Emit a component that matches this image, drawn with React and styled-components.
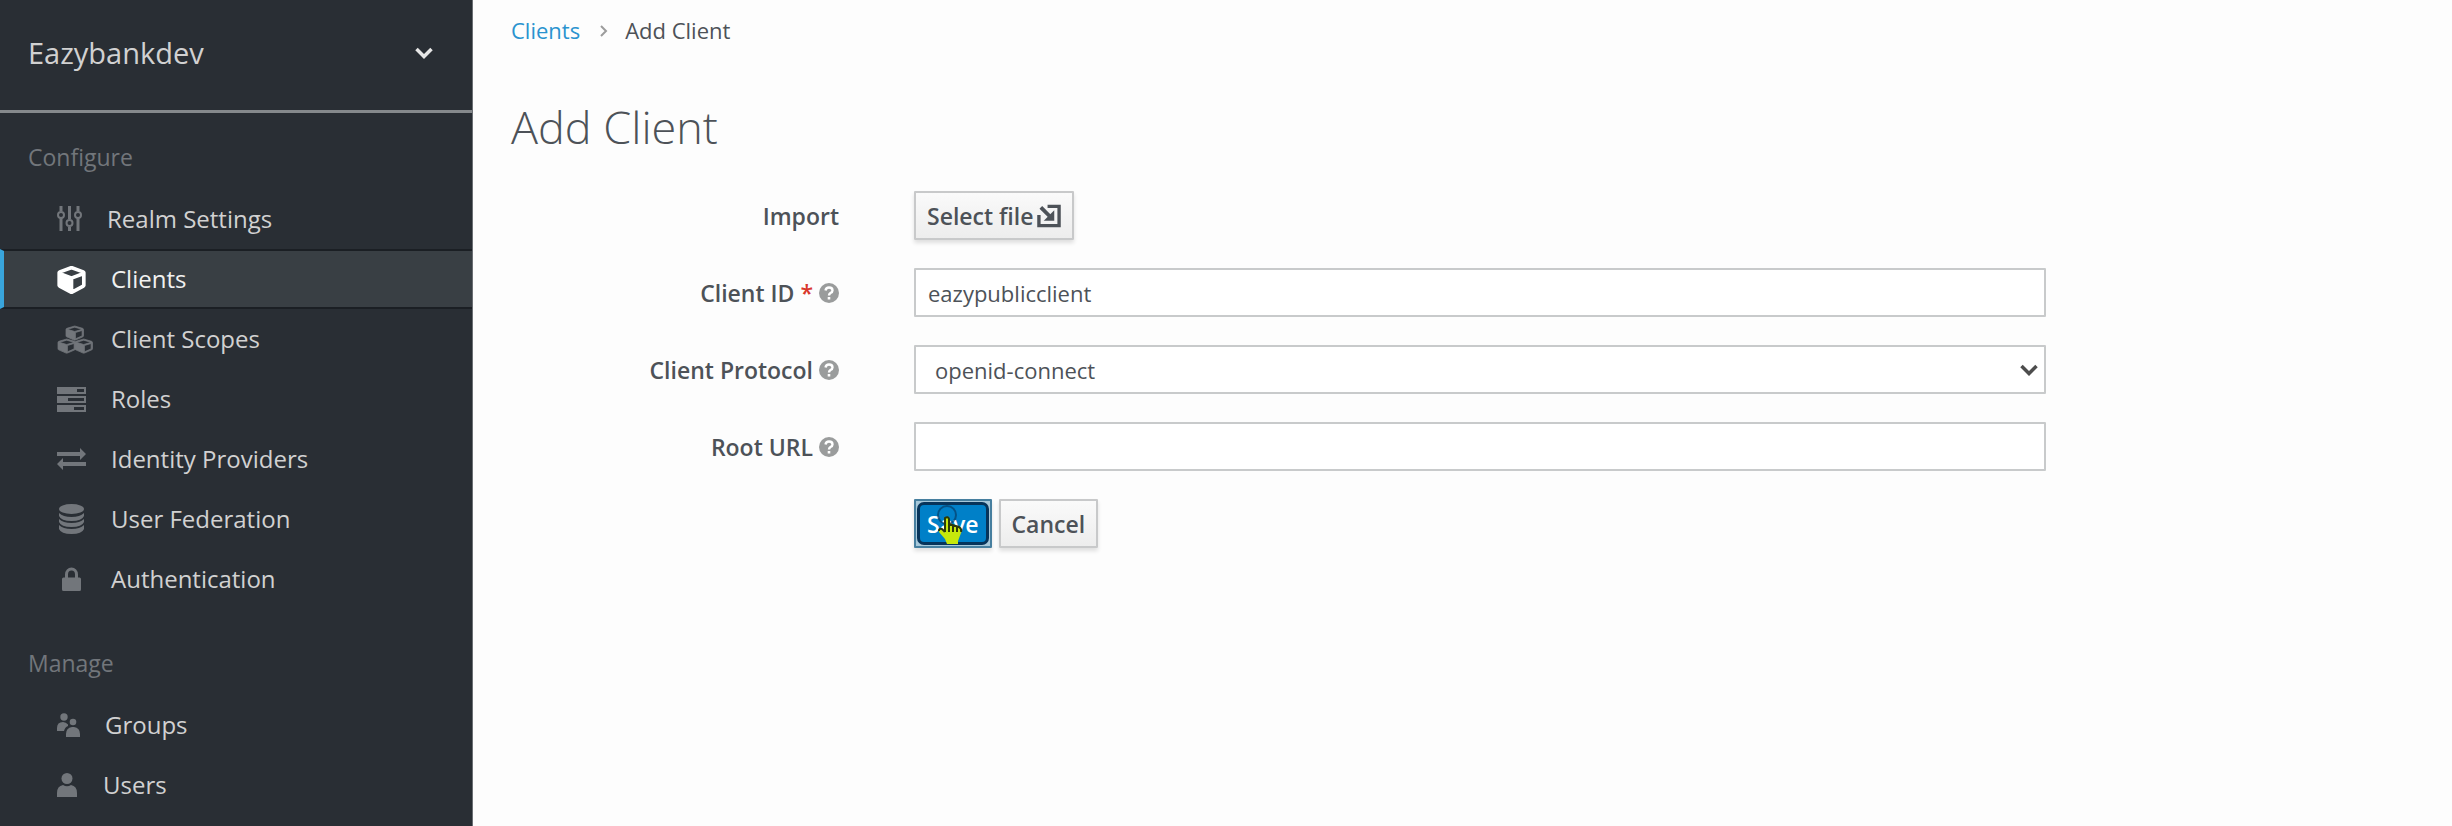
import React from "react";
import styled, { createGlobalStyle, css } from "styled-components";

const Global = createGlobalStyle`
  *, *::before, *::after { box-sizing: border-box; }
  body { margin: 0; background: #fdfdfd; color: #4d5258; font: 400 22px/36px "Open Sans", "Noto Sans", sans-serif; }
  ul, ol { list-style: none; margin: 0; padding: 0; }
  a { text-decoration: none; color: inherit; }
  button, input, select { font: inherit; color: inherit; }
`;

const Page = styled.div`
  display: grid;
  grid-template-columns: 473px minmax(0, 1fr);
  min-height: 100vh;
`;

const Sidebar = styled.nav`
  background: #292e34;
  border-right: 1px solid #6b6f74;
  color: #d1d1d1;
  height: 100vh;
  overflow: hidden;
`;

const RealmButton = styled.button`
  display: flex;
  align-items: center;
  justify-content: space-between;
  width: 100%;
  height: 113px;
  padding: 0 39px 4px 28px;
  border: 0;
  border-bottom: 3px solid #85898c;
  background: none;
  font-size: 29px;
`;

const SectionTitle = styled.h2`
  margin: 0;
  padding: ${(p) => (p.$first ? "26px" : "36px")} 28px 0;
  height: ${(p) => (p.$first ? "76px" : "86px")};
  font-size: 23px;
  line-height: 36px;
  font-weight: 400;
  color: #72767b;
`;

const NavLink = styled.a`
  display: flex;
  align-items: center;
  gap: 26px;
  height: 60px;
  padding-left: 53px;
  border-left: 4px solid transparent;
  border-top: 2px solid transparent;
  border-bottom: 2px solid transparent;
  font-size: 24px;
  font-weight: 500;
  color: #d1d1d1;
  svg { color: #72767b; }
  ${(p) => p.$active && css`
    background: #393f44;
    border-top-color: #1b1f24;
    border-bottom-color: #1b1f24;
    border-left-color: #39a5dc;
    color: #f1f1f1;
    svg { color: #fff; }
  `}
`;

const IconSlot = styled.span`
  display: flex;
  width: ${(p) => p.$width}px;
  svg { flex: none; fill: currentColor; }
`;

const Main = styled.main`
  padding: 12px 38px 0;
`;

const Breadcrumb = styled.ol`
  display: flex;
  align-items: center;
  a { color: #2a93cf; }
  svg { margin: 2px 17px 0 20px; }
`;

const Title = styled.h1`
  margin: 47px 0 32px;
  font-size: 45px;
  line-height: 64px;
  font-weight: 300;
`;

const Form = styled.form`
  display: grid;
  gap: 28px;
`;

const Row = styled.div`
  display: grid;
  grid-template-columns: 328fr 1132fr 293fr;
  column-gap: 75px;
  align-items: center;
  min-height: 49px;
`;

const Label = styled.label`
  display: flex;
  justify-content: flex-end;
  align-items: center;
  gap: 6px;
  font-size: 23px;
  font-weight: 600;
  white-space: nowrap;
`;

const Required = styled.span`
  color: #d9372c;
`;

const field = css`
  width: 100%;
  height: 49px;
  border: 2px solid #c8cacb;
  border-radius: 1px;
  background: #fff;
  outline: 0;
`;

const TextInput = styled.input`
  ${field}
  padding: 0 12px;
`;

const SelectWrap = styled.div`
  position: relative;
  svg { position: absolute; right: 8px; top: 19px; pointer-events: none; }
`;

const Select = styled.select`
  ${field}
  appearance: none;
  padding: 0 40px 0 19px;
`;

const Actions = styled.div`
  display: flex;
  gap: 7px;
  grid-column: 2;
`;

const Button = styled.button`
  position: relative;
  display: inline-flex;
  align-items: center;
  gap: 4px;
  height: 49px;
  padding: 0 11px;
  border: 2px solid #c8c9ca;
  border-radius: 1px;
  background: linear-gradient(#fafafa, #ededed);
  box-shadow: 0 3px 4px rgba(3, 3, 3, 0.12);
  font-size: 23px;
  font-weight: 600;
`;

const PrimaryButton = styled(Button)`
  border-color: #477f9f;
  background: #a7c8da;
  color: #fff;
  z-index: 0;
  &::before {
    content: "";
    position: absolute;
    inset: 1px;
    z-index: -1;
    border: 3px solid #07345a;
    border-radius: 7px;
    background: #0080c8;
  }
`;

const Pointer = styled.svg`
  position: absolute;
  left: 19px;
  top: 3px;
  pointer-events: none;
`;

const CUBE = "M896 1629l640-349v-636l-640 233v752zM832 765l698-254-698-254-698 254zM1664 512v768q0 35-18 65t-49 47l-704 384q-28 16-61 16t-61-16l-704-384q-31-17-49-47t-18-65v-768q0-40 23-73t61-47l704-256q22-8 44-8t44 8l704 256q38 14 61 47t23 73z";

const icons = {
  sliders: (
    <svg width="25" height="26" viewBox="0 0 25 26">
      <g fill="none" stroke="currentColor" strokeWidth="2">
        <path d="M4 0v5M4 12v13M12.500 0v13M12.500 21v4M21 0v5M21 12v13" strokeWidth="3" />
        <circle cx="4" cy="9" r="3" /><circle cx="12.500" cy="17" r="3" /><circle cx="21" cy="9" r="3" />
      </g>
    </svg>
  ),
  cube: (
    <svg width="29" height="30" viewBox="-40 -40 1744 1872">
      <path fillRule="evenodd" stroke="currentColor" strokeWidth="100" d={CUBE} />
    </svg>
  ),
  cubes: (
    <svg width="36" height="30" viewBox="0 0 36 30">
      {["translate(9 1)", "translate(1 14)", "translate(18 14)"].map((t) => (
        <g key={t} transform={t}>
          <path fillRule="evenodd" stroke="currentColor" strokeWidth="80" transform="scale(.0105 .0085)" d={CUBE} />
        </g>
      ))}
    </svg>
  ),
  tasks: (
    <svg width="29" height="25" viewBox="0 0 29 25">
      <path fillRule="evenodd" d="M0 0h29v7H0zM20 2v3h7V2zM0 9h29v7H0zM11 11v3h16v-3zM0 18h29v7H0zM17 20v3h10v-3z" />
    </svg>
  ),
  exchange: (
    <svg width="29" height="22" viewBox="0 0 29 22">
      <path d="M0 4h23V0l6 6-6 6V8H0zM29 14H6v-4l-6 6 6 6v-4h23z" />
    </svg>
  ),
  database: (
    <svg width="28" height="30" viewBox="0 0 28 30">
      <ellipse cx="14.500" cy="5" rx="12.500" ry="5" />
      <path d="M2 9q4 4 12.500 4T27 9v3q-2 5-12.500 5T2 12zM2 15q4 4 12.500 4T27 15v3q-2 5-12.500 5T2 18zM2 21q4 4 12.500 4T27 21v4q-2 5-12.500 5T2 25z" />
    </svg>
  ),
  lock: (
    <svg width="28" height="24" viewBox="0 0 28 24">
      <path fillRule="evenodd" d="M5 12q0-1.500 1.500-1.500H8V7.500a6.500 7 0 0 1 13 0v3h1.500q1.500 0 1.500 1.500v10.500q0 1.500-1.500 1.500h-16Q5 24 5 22.500zM11 10.500h7v-3a3.500 4 0 0 0-7 0z" />
    </svg>
  ),
  groups: (
    <svg width="23" height="24" viewBox="0 0 23 24">
      <circle cx="7" cy="4" r="3.700" /><circle cx="16" cy="9" r="3.300" />
      <path d="M0 18v-3q0-6 6-6 3 0 5 2.500L11 13q-3 1-4 5zM9 24v-3q0-6 6-7h2q6 1 6 7v3z" />
    </svg>
  ),
  user: (
    <svg width="20" height="24" viewBox="0 0 20 24">
      <circle cx="10" cy="5.500" r="5.500" /><path d="M0 24v-4q0-7 6-8 4 2.500 8 0 6 1 6 8v4z" />
    </svg>
  ),
};

const Chevron = ({ color }) => (
  <svg width="18" height="12" viewBox="0 0 18 12" fill="none" stroke={color} strokeWidth="3.500" aria-hidden="true">
    <path d="M1.500 2l7.500 7.500L16.500 2" />
  </svg>
);

const Help = () => (
  <svg width="20" height="20" viewBox="0 0 20 20" role="img" aria-label="Help">
    <circle cx="10" cy="10" r="10" fill="#9a9c9c" />
    <path d="M6.500 7.500Q7 4.500 10 4.500q3.500 0 3.500 3 0 1.500-2 2.500-1.500 1-1.500 2.500" fill="none" stroke="#fff" strokeWidth="2.400" />
    <path d="M8.700 14h2.600v2.500H8.700z" fill="#fff" />
  </svg>
);

const ImportIcon = () => (
  <svg width="24" height="24" viewBox="0 0 25 24" aria-hidden="true">
    <path d="M11 2h12v20H2V11" fill="none" stroke="#4d5258" strokeWidth="3.500" />
    <path d="M4 3l9 9" stroke="#4d5258" strokeWidth="4" />
    <path d="M18 6v11H7z" fill="#4d5258" />
  </svg>
);

const configure = [
  ["Realm Settings", "sliders", 24],
  ["Clients", "cube", 28],
  ["Client Scopes", "cubes", 28],
  ["Roles", "tasks", 28],
  ["Identity Providers", "exchange", 28],
  ["User Federation", "database", 28],
  ["Authentication", "lock", 28],
];
const manage = [["Groups", "groups", 22], ["Users", "user", 20]];

const Menu = ({ items }) => (
  <ul>
    {items.map(([name, icon, width]) => (
      <li key={name}>
        <NavLink href="#" $active={name === "Clients"}>
          <IconSlot $width={width} aria-hidden="true">{icons[icon]}</IconSlot>
          {name}
        </NavLink>
      </li>
    ))}
  </ul>
);

export default function App() {
  return (
    <>
      <Global />
      <Page>
        <Sidebar>
          <RealmButton type="button">Eazybankdev<Chevron color="#e6e6e6" /></RealmButton>
          <SectionTitle $first>Configure</SectionTitle>
          <Menu items={configure} />
          <SectionTitle>Manage</SectionTitle>
          <Menu items={manage} />
        </Sidebar>
        <Main>
          <Breadcrumb>
            <li><a href="#">Clients</a></li>
            <svg width="8" height="12" viewBox="0 0 8 12" fill="none" stroke="#9c9c9c" strokeWidth="2" aria-hidden="true"><path d="M1 1l5 5-5 5" /></svg>
            <li>Add Client</li>
          </Breadcrumb>
          <Title>Add Client</Title>
          <Form onSubmit={(e) => e.preventDefault()}>
            <Row>
              <Label htmlFor="import">Import</Label>
              <Actions><Button id="import" type="button">Select file<ImportIcon /></Button></Actions>
            </Row>
            <Row>
              <Label htmlFor="clientId">Client ID <Required>*</Required><Help /></Label>
              <TextInput id="clientId" defaultValue="eazypublicclient" />
            </Row>
            <Row>
              <Label htmlFor="protocol">Client Protocol<Help /></Label>
              <SelectWrap>
                <Select id="protocol" defaultValue="openid-connect">
                  <option>openid-connect</option>
                  <option>saml</option>
                </Select>
                <Chevron color="#4d4d4d" />
              </SelectWrap>
            </Row>
            <Row>
              <Label htmlFor="rootUrl">Root URL<Help /></Label>
              <TextInput id="rootUrl" />
            </Row>
            <Row>
              <Actions>
                <PrimaryButton type="submit">
                  Save
                  <Pointer width="30" height="42" viewBox="0 0 30 42" aria-hidden="true">
                    <circle cx="12" cy="11" r="9" fill="none" stroke="#07345a" strokeWidth="2" opacity=".6" />
                    <path d="M10 14q3-2 4 1v5l10 3q3 2 2 6l-3 8v3H12l-2-5-6-7q0-3 3-2l3 3z" fill="#c6e80c" />
                    <path d="M10 28V14q3-2 4 1v5l10 3q3 2 2 5M14 20v8M18 21v7M22 23v5M10 28l-3-3q-3-1-3 2" fill="none" stroke="#2d3a08" strokeWidth="2" />
                  </Pointer>
                </PrimaryButton>
                <Button type="button">Cancel</Button>
              </Actions>
            </Row>
          </Form>
        </Main>
      </Page>
    </>
  );
}
